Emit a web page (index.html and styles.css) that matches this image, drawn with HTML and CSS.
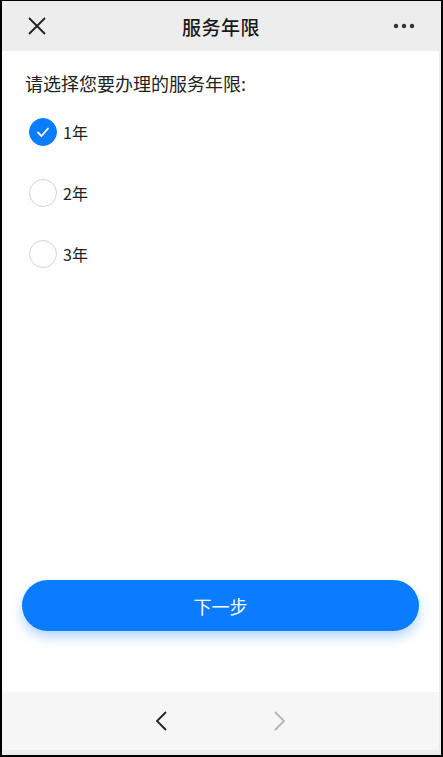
FILE: index.html
```html
<!DOCTYPE html>
<html lang="zh-CN">
<head>
    <meta charset="UTF-8">
    <meta name="viewport" content="width=device-width, initial-scale=1.0">
    <title>服务年限</title>
    <link rel="stylesheet" href="styles.css">
</head>
<body>
    <div class="frame">
        <div class="screen">
            <div class="nav-bar">
                <span class="nav-close">
                    <svg width="20" height="20" viewBox="0 0 20 20"><path d="M2 2L18 18M18 2L2 18" stroke="#222" stroke-width="1.8" fill="none"/></svg>
                </span>
                <span class="nav-title">服务年限</span>
                <span class="nav-more">
                    <svg width="22" height="6" viewBox="0 0 22 6"><circle cx="3" cy="3" r="2.2" fill="#333"/><circle cx="11" cy="3" r="2.2" fill="#333"/><circle cx="19" cy="3" r="2.2" fill="#333"/></svg>
                </span>
            </div>

            <div class="content">
                <p class="prompt">请选择您要办理的服务年限:</p>
                <ul class="options">
                    <li class="option checked">
                        <span class="radio">
                            <svg width="14" height="14" viewBox="0 0 14 14"><path d="M2 7.5L5.5 11L12 3.5" stroke="#fff" stroke-width="1.8" fill="none" stroke-linecap="round" stroke-linejoin="round"/></svg>
                        </span>
                        <span class="option-label">1年</span>
                    </li>
                    <li class="option">
                        <span class="radio"></span>
                        <span class="option-label">2年</span>
                    </li>
                    <li class="option">
                        <span class="radio"></span>
                        <span class="option-label">3年</span>
                    </li>
                </ul>
                <div class="actions">
                    <button class="next-btn">下一步</button>
                </div>
            </div>

            <div class="tool-bar">
                <span class="tool-btn">
                    <svg width="14" height="22" viewBox="0 0 14 22"><path d="M11 2L2 11L11 20" stroke="#222" stroke-width="1.8" fill="none"/></svg>
                </span>
                <span class="tool-btn disabled">
                    <svg width="14" height="22" viewBox="0 0 14 22"><path d="M3 2L12 11L3 20" stroke="#b5b5b5" stroke-width="1.8" fill="none"/></svg>
                </span>
            </div>
            <div class="tool-edge"></div>
        </div>
    </div>
</body>
</html>
```

FILE: styles.css
```css
html, body {
    margin: 0;
    padding: 0;
}
body {
    font-family: "Noto Sans CJK SC", "Liberation Sans", sans-serif;
    color: #222;
}
.frame {
    width: 443px;
    height: 757px;
    box-sizing: border-box;
    border-style: solid;
    border-color: #000;
    border-width: 1px 2px 2px 2px;
}
.screen {
    height: 100%;
    display: flex;
    flex-direction: column;
    background: #fff;
    border-right: 2px solid #ececec;
}
.nav-bar {
    height: 50px;
    flex: none;
    background: #ededed;
    display: flex;
    align-items: center;
    justify-content: space-between;
    padding: 0 24px 0 25px;
}
.nav-close,
.nav-more {
    width: 24px;
    display: flex;
    align-items: center;
}
.nav-more {
    justify-content: flex-end;
}
.nav-title {
    font-size: 19px;
    font-weight: 500;
    color: #1a1a1a;
    letter-spacing: 0.5px;
}
.content {
    flex: 1;
    display: flex;
    flex-direction: column;
    padding: 0 20px 0 23px;
}
.prompt {
    margin: 19px 0 0;
    font-size: 18px;
    line-height: 26px;
    color: #222;
}
.options {
    list-style: none;
    margin: 5px 0 0;
    padding: 0;
}
.option {
    height: 61px;
    display: flex;
    align-items: center;
}
.radio {
    width: 26px;
    height: 26px;
    margin-left: 4px;
    border: 1px solid #d4d4d4;
    border-radius: 50%;
    display: flex;
    align-items: center;
    justify-content: center;
    flex: none;
}
.option.checked .radio {
    background: #0a7cff;
    border-color: #0a7cff;
}
.option-label {
    margin-left: 6px;
    font-size: 16px;
    color: #222;
}
.actions {
    margin-top: auto;
    padding-bottom: 61px;
}
.next-btn {
    width: 397px;
    margin-left: -3px;
    height: 51px;
    border: none;
    border-radius: 26px;
    background: #0a7cff;
    color: #fff;
    font-family: inherit;
    font-size: 18px;
    box-shadow: 0 6px 12px rgba(10, 124, 255, 0.3);
}
.tool-bar {
    height: 58px;
    flex: none;
    background: #f6f6f6;
    display: flex;
    align-items: center;
    justify-content: center;
    gap: 103px;
}
.tool-btn {
    display: flex;
}
.tool-edge {
    height: 5px;
    flex: none;
    background: #ececec;
}
```
